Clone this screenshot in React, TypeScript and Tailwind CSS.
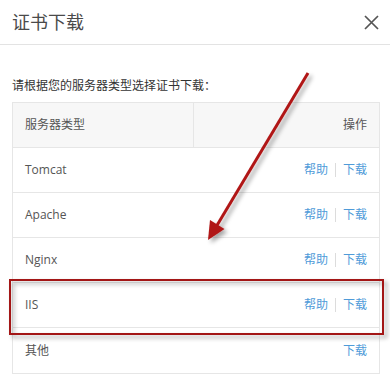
const rows = [
  { name: 'Tomcat', help: true },
  { name: 'Apache', help: true },
  { name: 'Nginx', help: true },
  { name: 'IIS', help: true },
  { name: '其他', help: false },
];

const font = { fontFamily: '"Open Sans", "Noto Sans CJK SC", sans-serif' };

const Annotations = () => {
  return (
    <svg
      className="absolute left-0 top-0 pointer-events-none"
      width="390"
      height="374"
      viewBox="0 0 390 374"
    >
      <defs>
        <filter id="shadow" x="-20%" y="-20%" width="140%" height="140%">
          <feDropShadow dx="3" dy="3" stdDeviation="2" floodColor="#000" floodOpacity="0.35" />
        </filter>
      </defs>
      <g filter="url(#shadow)">
        <line x1="308" y1="73" x2="216" y2="227" stroke="#b01515" strokeWidth="3" />
        <polygon points="208,240 224.5,229 210,220" fill="#b01515" />
        <rect x="10" y="280" width="373" height="54" fill="none" stroke="#a31212" strokeWidth="2" />
      </g>
    </svg>
  );
};

const App = () => {
  return (
    <div className="relative w-[390px] h-[374px] bg-white overflow-hidden" style={font}>
      <div className="h-[45px] pl-3 pr-[11px] flex items-center justify-between border-b border-[#e3e3e3]">
        <span className="text-[18px] text-[#4a4a4a]">证书下载</span>
        <svg width="15" height="15" viewBox="0 0 15 15">
          <path d="M1 1 L14 14 M14 1 L1 14" stroke="#555" strokeWidth="1.7" />
        </svg>
      </div>
      <div className="pt-[29px]">
        <p className="px-3 text-[12px] leading-[24px] text-[#333]">请根据您的服务器类型选择证书下载：</p>
        <div className="ml-3 mt-[4px] w-[368px] border border-[#e6e6e6] text-[12px] text-[#555]">
          <div className="h-[45px] flex bg-[#f7f7f7] border-b border-[#e6e6e6]">
            <div className="w-[181px] pl-3 flex items-center border-r border-[#e6e6e6]">服务器类型</div>
            <div className="flex-1 pr-3 flex items-center justify-end">操作</div>
          </div>
          {rows.map((r) => (
            <div key={r.name} className="h-[45px] flex items-center justify-between pl-3 pr-3 border-b border-[#e6e6e6] last:border-b-0">
              <span>{r.name}</span>
              <span className="flex items-center text-[#4f9bd9]">
                {r.help && (
                  <>
                    <span>帮助</span>
                    <span className="mx-[7px] h-[14px] w-px bg-[#dcdcdc]" />
                  </>
                )}
                <span>下载</span>
              </span>
            </div>
          ))}
        </div>
      </div>
      <Annotations />
    </div>
  );
};

export default App;
